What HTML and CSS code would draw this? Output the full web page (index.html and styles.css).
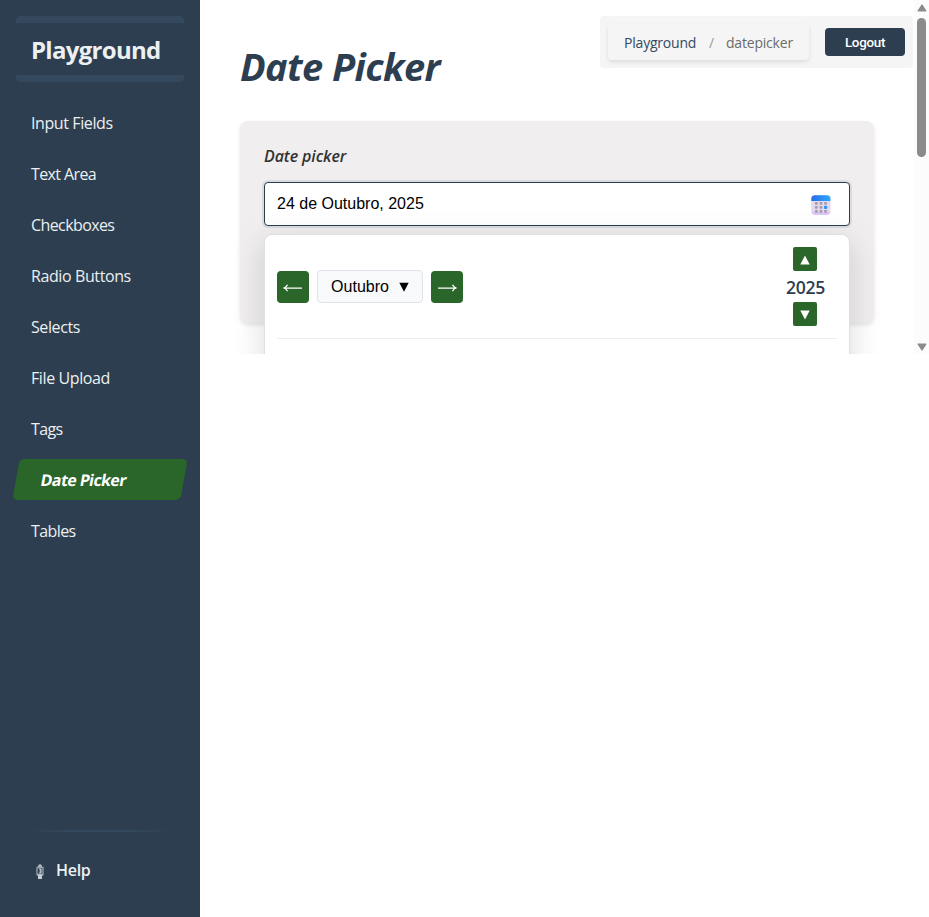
FILE: index.html
```html
<!DOCTYPE html>
<html lang="pt">
<head>
<meta charset="utf-8">
<title>Playground</title>
<link rel="stylesheet" href="styles.css">
</head>
<body>
<div class="app">
  <aside class="sidebar">
    <div class="brand"><span class="brand-name">Playground</span></div>
    <nav class="menu">
      <a class="item"><span>Input Fields</span></a>
      <a class="item tight"><span>Text Area</span></a>
      <a class="item tight"><span>Checkboxes</span></a>
      <a class="item"><span>Radio Buttons</span></a>
      <a class="item"><span>Selects</span></a>
      <a class="item"><span>File Upload</span></a>
      <a class="item tight"><span>Tags</span></a>
      <a class="item active"><span>Date Picker</span></a>
      <a class="item tight"><span>Tables</span></a>
    </nav>
    <div class="side-foot">
      <div class="rule"></div>
      <a class="help">
        <svg width="8" height="16" viewBox="0 0 8 16"><path d="M2 2.500Q4 0 6 2.500V4H2z" fill="#aeb8c0"/><path d="M1 4.500h6v7H1z" fill="none" stroke="#98a4ae" stroke-width="1.300"/><path d="M3 6h2v4H3M3.500 8H5" fill="none" stroke="#dce0e2"/><path d="M1.500 11.500h5V13H6v3H2v-3h-.5z" fill="#c5ccd1"/></svg>
        <span>Help</span>
      </a>
    </div>
  </aside>
  <main class="main">
    <div class="content">
      <header class="top">
        <h1>Date Picker</h1>
        <div class="toolbar">
          <div class="crumbs"><span class="c1">Playground</span><span class="sep">/</span><span class="c2">datepicker</span></div>
          <button class="logout">Logout</button>
        </div>
      </header>
      <section class="card">
        <label class="label">Date picker</label>
        <div class="field">
          <span>24 de Outubro, 2025</span>
          <svg width="20" height="20" viewBox="0 0 20 20">
            <defs>
              <linearGradient id="top" x2="1"><stop stop-color="#286be8"/><stop offset="1" stop-color="#2ea9ff"/></linearGradient>
              <linearGradient id="page" x2="0" y2="1"><stop stop-color="#e2d8ec"/><stop offset=".8" stop-color="#e5d8f1"/><stop offset="1" stop-color="#d5b5f5"/></linearGradient>
            </defs>
            <rect x=".3" y=".3" width="19.200" height="19.500" rx="3.800" fill="url(#page)"/>
            <path d="M.3 6V4A3.700 3.700 0 0 1 4 .3h11.700A3.700 3.700 0 0 1 19.500 4v2z" fill="url(#top)"/>
            <g fill="#a39baa"><rect x="4" y="7" width="2.700" height="2.700" rx=".7"/><rect x="8.600" y="7" width="2.700" height="2.700" rx=".7"/><rect x="13.200" y="7" width="2.700" height="2.700" rx=".7"/><rect x="4" y="11" width="2.700" height="2.700" rx=".7"/><rect x="8.600" y="11" width="2.700" height="2.700" rx=".7"/><rect x="4" y="15" width="2.700" height="2.700" rx=".7"/><rect x="8.600" y="15" width="2.700" height="2.700" rx=".7"/><rect x="13.200" y="15" width="2.700" height="2.700" rx=".7"/></g>
            <rect x="13" y="10.800" width="3.200" height="3.200" rx=".8" fill="#3097f5"/>
          </svg>
        </div>
        <div class="popup">
          <div class="popup-head">
            <div class="months">
              <button class="sq"><svg width="20" height="10" viewBox="0 0 20 10"><path d="M1 5h18M4.500 1.800Q3.300 4.200 1 5Q3.300 5.800 4.500 8.200" fill="none" stroke="#fff" stroke-width="1.250"/></svg></button>
              <div class="month"><span>Outubro</span><svg width="10" height="10" viewBox="0 0 10 10"><path d="M.3.700h9.400L5 9.700z"/></svg></div>
              <button class="sq"><svg width="20" height="10" viewBox="0 0 20 10"><path d="M1 5h18M15.500 1.800Q16.700 4.200 19 5Q16.700 5.800 15.500 8.200" fill="none" stroke="#fff" stroke-width="1.250"/></svg></button>
            </div>
            <div class="years">
              <button class="step"><svg width="10" height="10" viewBox="0 0 10 10"><path d="M.3 9.500h9.400L5 .5z" fill="#fff"/></svg></button>
              <span class="year">2025</span>
              <button class="step"><svg width="10" height="10" viewBox="0 0 10 10"><path d="M.3.500h9.400L5 9.500z" fill="#fff"/></svg></button>
            </div>
          </div>
        </div>
      </section>
    </div>
    <div class="scroll">
      <svg width="10" height="8" viewBox="0 0 10 8"><path d="M1.300 6.800h7.400L5 1.200z" fill="#8b8b8b" stroke="#8b8b8b" stroke-width="1.500" stroke-linejoin="round"/></svg>
      <div class="thumb"></div>
      <svg class="down" width="10" height="8" viewBox="0 0 10 8"><path d="M1.300 1.200h7.400L5 6.800z" fill="#8b8b8b" stroke="#8b8b8b" stroke-width="1.500" stroke-linejoin="round"/></svg>
    </div>
  </main>
</div>
</body>
</html>
```
FILE: styles.css
```css
* { box-sizing: border-box; }
body { margin: 0; background: #fff; font-family: "Segoe UI", "Open Sans", sans-serif; font-size: 16px; color: #2c3e50; overflow: hidden; }
button { border: 0; padding: 0; margin: 0; }
svg { display: block; flex: none; }
.app { display: flex; height: 917px; }
.sidebar { width: 200px; flex: none; background: #2c3e50; padding: 16px; display: flex; flex-direction: column; color: #ecf0f1; }
.brand { height: 66px; display: flex; align-items: center; padding-left: 15px; border-radius: 5px; background: linear-gradient(#34495e 0 7px, transparent 7px 59px, #34495e 59px); }
.brand-name { font-size: 24px; line-height: 32px; font-weight: 700; letter-spacing: -.7px; white-space: nowrap; margin-top: 2px; }
.menu { display: flex; flex-direction: column; gap: 10px; margin-top: 20px; }
.item { height: 41px; display: flex; align-items: center; padding-left: 15px; letter-spacing: -.4px; white-space: nowrap; }
.tight { letter-spacing: -.6px; }
.active { background: #2a6529; transform: skewX(-10deg); border-radius: 5px; color: #fff; font-weight: 700; padding-left: 25px; letter-spacing: -.6px; }
.side-foot { margin-top: auto; height: 71px; }
.rule { height: 2px; margin: 0 8px; background: linear-gradient(90deg, transparent, #34495e 30% 70%, transparent); }
.help { display: flex; align-items: center; gap: 12px; padding-left: 20px; margin-top: 26px; height: 24px; font-weight: 600; letter-spacing: -.3px; }
.help svg { margin-top: 2px; }
.main { width: 729px; height: 354px; overflow: hidden; display: flex; }
.content { width: 714px; flex: none; overflow: hidden; padding: 16px 1px 0 40px; }
.top { display: flex; justify-content: space-between; height: 105px; }
h1 { margin: 24px 0 0; font-size: 38px; line-height: 52px; font-style: italic; font-weight: 700; letter-spacing: -.6px; white-space: nowrap; }
.toolbar { width: 313px; height: 52px; background: #f5f5f5; border-radius: 4px; display: flex; align-items: center; justify-content: space-between; padding: 0 8px; }
.crumbs { width: 201px; height: 36px; border-radius: 4px; box-shadow: 0 2px 4px rgba(0,0,0,.1); display: flex; align-items: center; padding-left: 16px; font-size: 14px; letter-spacing: -.2px; }
.c1 { color: #34495e; width: 85px; }
.sep { color: #999; width: 17px; }
.c2 { color: #6c6c6c; }
.logout { width: 80px; height: 28px; border-radius: 4px; background: #2c3e50; color: #fff; font: 500 13.333px Roboto, sans-serif; letter-spacing: -.25px; padding-top: 1px; }
.card { position: relative; width: 634px; height: 202px; background: #f0eeef; border-radius: 8px; padding: 24px; box-shadow: 0 2px 4px rgba(0,0,0,.1); }
.label { display: block; height: 37px; line-height: 22px; font-size: 16px; letter-spacing: -.1px; font-style: italic; font-weight: 600; color: #333; }
.field { width: 586px; height: 44px; border: 1px solid #2c3e50; border-radius: 4px; background: #fff; box-shadow: 0 0 0 2px rgba(44,62,80,.1); display: flex; align-items: center; justify-content: space-between; padding: 0 18px 0 12px; font-family: "Liberation Sans", sans-serif; color: #000; }
.field svg { margin-top: 2px; }
.popup { position: absolute; top: 113px; left: 24px; width: 586px; height: 360px; background: #fff; border: 1px solid #e0e0e0; border-radius: 8px; box-shadow: 0 8px 32px rgba(0,0,0,.15); padding: 12px; }
.popup-head { height: 92px; border-bottom: 1px solid #ededed; display: flex; justify-content: space-between; align-items: flex-start; }
.months { display: flex; gap: 8px; align-items: center; margin-top: 23px; }
.sq { width: 32px; height: 32px; border-radius: 4px; background: #2a6529; display: grid; place-items: center; padding-top: 3px; }
.month { width: 106px; height: 33px; border: 1px solid #dfe3e9; border-radius: 4px; background: #f8f9fa; display: flex; align-items: center; justify-content: center; gap: 10px; font-family: "Liberation Sans", sans-serif; color: #000; }
.years { display: flex; flex-direction: column; align-items: center; margin-right: 12px; }
.step { width: 24px; height: 24px; border-radius: 2px; background: #2a6529; display: grid; place-items: center; padding-top: 1px; }
.year { height: 31px; line-height: 32px; font-size: 17.600px; font-weight: 600; letter-spacing: -.3px; }
.scroll { width: 15px; background: #fcfcfc; display: flex; flex-direction: column; align-items: center; padding: 4px 0 3px; }
.thumb { width: 9px; height: 139px; border-radius: 5px; background: #8b8b8b; margin-top: 6px; }
.down { margin-top: auto; }
```
